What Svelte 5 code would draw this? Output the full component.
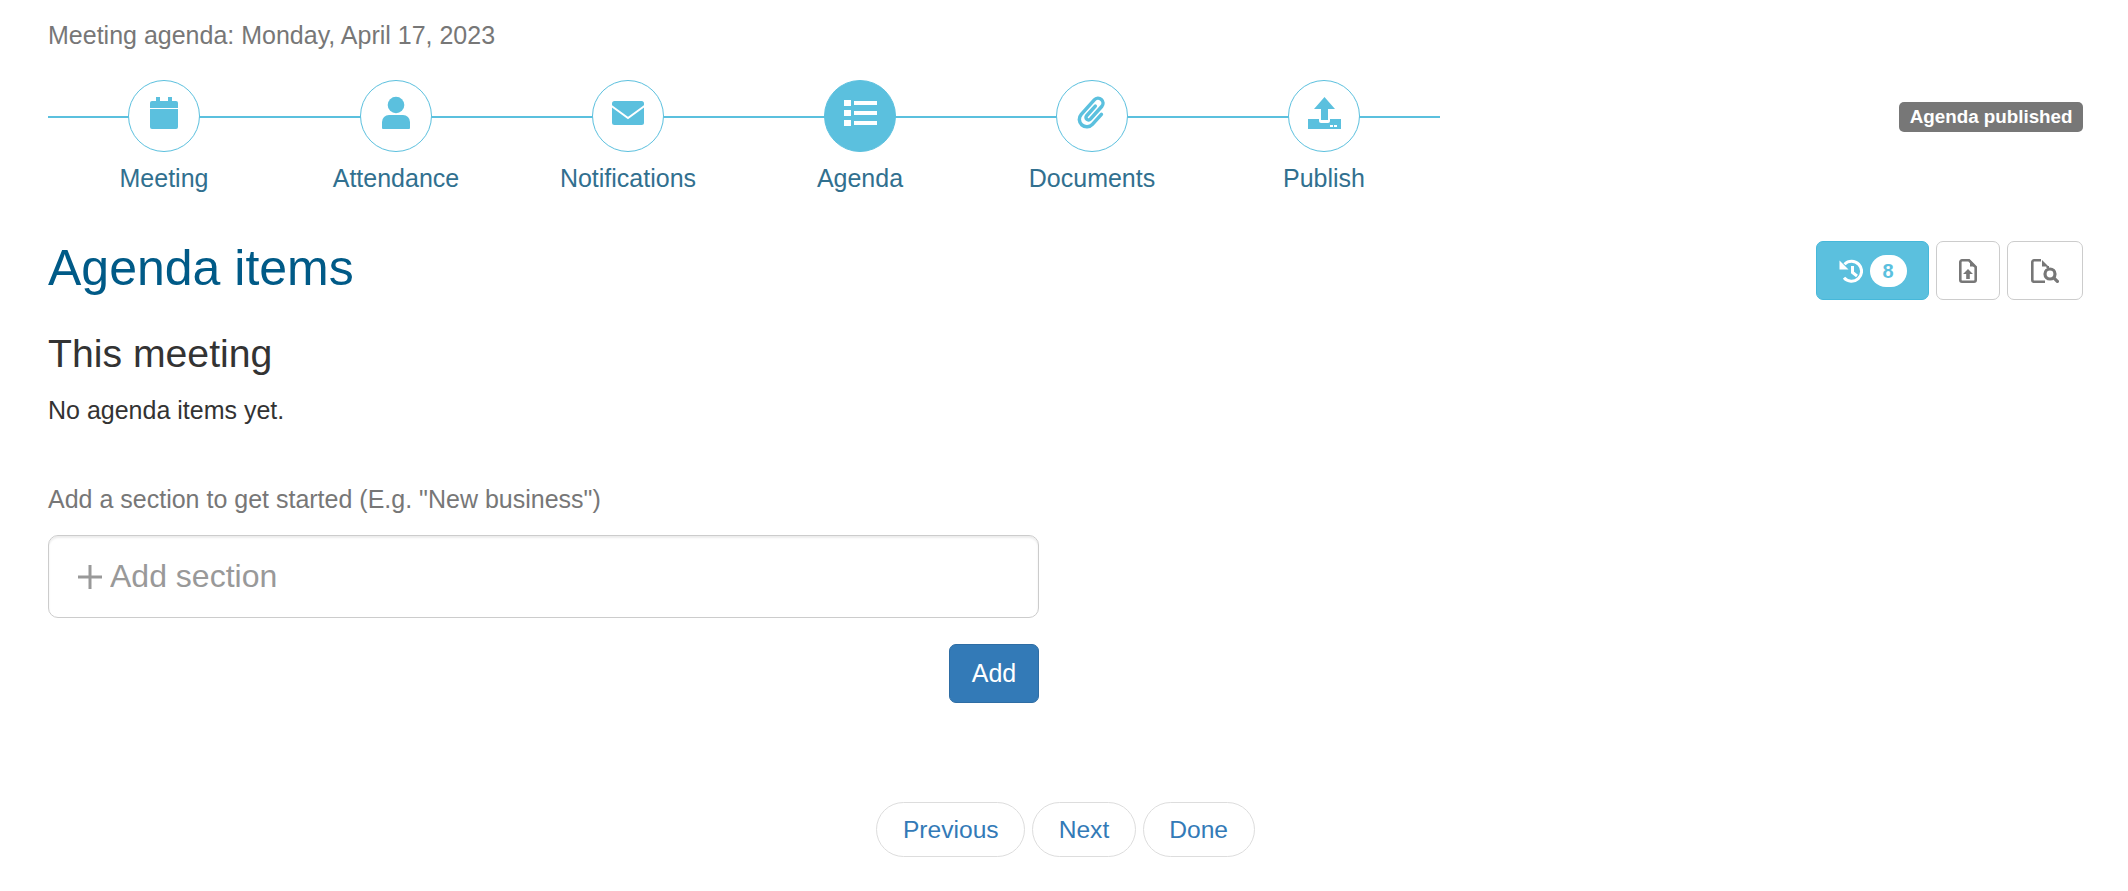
<script>
  const steps = [
    { key: 'meeting', label: 'Meeting' },
    { key: 'attendance', label: 'Attendance' },
    { key: 'notifications', label: 'Notifications' },
    { key: 'agenda', label: 'Agenda', active: true },
    { key: 'documents', label: 'Documents' },
    { key: 'publish', label: 'Publish' }
  ];
</script>

<div class="page">
  <div class="subtitle">Meeting agenda: Monday, April 17, 2023</div>

  <div class="top-row">
    <div class="stepper">
      {#each steps as step}
        <div class="step">
          <div class="track">
            <div class="circle" class:active={step.active}>
              <svg viewBox="0 0 40 40" width="40" height="40">
                {#if step.key === 'meeting'}
                  <rect x="12" y="1" width="4" height="6" />
                  <rect x="24" y="1" width="4" height="6" />
                  <rect x="6" y="5" width="28" height="28" rx="2" />
                  <rect class="cut" x="6" y="12" width="28" height="1" />
                {:else if step.key === 'attendance'}
                  <circle cx="20" cy="9" r="8.3" />
                  <path d="M6 32V26a7 7 0 0 1 7-7h14a7 7 0 0 1 7 7v6a1 1 0 0 1-1 1H7a1 1 0 0 1-1-1z" />
                {:else if step.key === 'notifications'}
                  <rect x="4" y="5" width="32" height="24" rx="2.5" />
                  <path class="cut-line" d="M3.5 10 20 22 36.500 10" />
                {:else if step.key === 'agenda'}
                  <rect class="cut" x="4" y="4" width="7" height="6" />
                  <rect class="cut" x="4" y="14" width="7" height="6" />
                  <rect class="cut" x="4" y="24" width="7" height="6" />
                  <rect class="cut" x="14" y="5" width="23" height="4" />
                  <rect class="cut" x="14" y="15" width="23" height="4" />
                  <rect class="cut" x="14" y="25" width="23" height="4" />
                {:else if step.key === 'documents'}
                  <g transform="rotate(42 20.500 17)">
                    <path class="clip" d="M28 12V25.500a7.500 7.500 0 0 1-15 0V6a5 5 0 0 1 10 0V23a2.500 2.500 0 0 1-5 0V10" />
                  </g>
                {:else}
                  <path d="M4 23h33v9.500a.5.5 0 0 1-.5.5H4.500a.5.5 0 0 1-.5-.5z" />
                  <path class="cut" d="M15 22h11v3a2 2 0 0 1-2 2h-7a2 2 0 0 1-2-2z" />
                  <path d="M20.500 1 31 13h-7v11h-7V13H10z" />
                  <rect class="cut" x="26" y="29" width="3" height="2" />
                  <rect class="cut" x="30" y="29" width="3" height="2" />
                {/if}
              </svg>
            </div>
          </div>
          <div class="step-label">{step.label}</div>
        </div>
      {/each}
    </div>
    <span class="status">Agenda published</span>
  </div>

  <div class="heading-row">
    <h1>Agenda items</h1>
    <div class="tools">
      <button class="tool history">
        <svg class="history-icon" viewBox="0 0 24 24" width="24" height="24">
          <path class="hist-line" d="M5.500 5.200A10 10 0 1 1 5 18.800" />
          <path class="hist-fill" d="M0.500 1.500v9h9z" />
          <path class="hist-line" d="M13.500 7v6.500l4.500 3.500" />
        </svg>
        <span class="count">8</span>
      </button>
      <button class="tool file-up" aria-label="Upload">
        <svg viewBox="0 0 18 24" width="18" height="24">
          <path class="doc-line" d="M10 1.300H3a1.700 1.700 0 0 0-1.700 1.700V21a1.700 1.700 0 0 0 1.700 1.700h12a1.700 1.700 0 0 0 1.700-1.700V8z" />
          <path class="doc-fill" d="M11 1l6 6.500h-6z" />
          <path class="doc-fill" d="M9 10l5 5h-3.200V20H7.200v-5H4z" />
        </svg>
      </button>
      <button class="tool file-find" aria-label="Preview">
        <svg viewBox="0 0 28 24" width="28" height="24">
          <path class="doc-line" d="M10 1.300H3a1.700 1.700 0 0 0-1.700 1.700V21a1.700 1.700 0 0 0 1.700 1.700h11" />
          <path class="doc-line" d="M16.700 7V9" />
          <path class="doc-fill" d="M11 1l6.500 6.500H11z" />
          <circle class="doc-line lens" cx="19" cy="15" r="5" />
          <path class="doc-line lens" d="M22.800 18.800 27.500 23.500" />
        </svg>
      </button>
    </div>
  </div>

  <h3>This meeting</h3>
  <p class="empty">No agenda items yet.</p>

  <div class="form">
    <label class="hint" for="section">Add a section to get started (E.g. "New business")</label>
    <div class="input-box">
      <svg class="plus" viewBox="0 0 24 24" width="24" height="24">
        <rect x="10.500" y="0" width="3" height="24" />
        <rect x="0" y="10.500" width="24" height="3" />
      </svg>
      <input id="section" type="text" placeholder="Add section" />
    </div>
    <div class="form-actions">
      <button class="add">Add</button>
    </div>
  </div>

  <div class="pager">
    <button>Previous</button>
    <button>Next</button>
    <button>Done</button>
  </div>
</div>

<style>
  :global(body) {
    margin: 0;
    background: #fff;
    font-family: "Liberation Sans", Arial, sans-serif;
  }

  .page {
    padding: 20px 45px 0 48px;
    color: #333;
  }

  .subtitle {
    font-size: 25px;
    line-height: 30px;
    color: #777;
    margin-bottom: 30px;
  }

  .top-row {
    display: flex;
    justify-content: space-between;
    align-items: flex-start;
  }

  .stepper {
    display: flex;
  }

  .step {
    width: 232px;
    text-align: center;
  }

  .track {
    display: flex;
    justify-content: center;
    background: linear-gradient(#5bc0de, #5bc0de) 0 36px / 100% 2px no-repeat;
  }

  .circle {
    box-sizing: border-box;
    width: 72px;
    height: 72px;
    border: 1.500px solid #5bc0de;
    border-radius: 50%;
    background: #fff;
    display: flex;
    align-items: center;
    justify-content: center;
    fill: #5bc0de;
  }

  .circle.active {
    background: #5bc0de;
  }

  .cut {
    fill: #fff;
  }

  .cut-line {
    fill: none;
    stroke: #fff;
    stroke-width: 2;
  }

  .clip {
    fill: none;
    stroke: #5bc0de;
    stroke-width: 3.500;
    stroke-linecap: round;
  }

  .step-label {
    margin-top: 8px;
    font-size: 25px;
    line-height: 36px;
    color: #31708f;
  }

  .status {
    margin-top: 22px;
    box-sizing: border-box;
    height: 30px;
    padding: 0 10.500px;
    border-radius: 5px;
    background: #777;
    color: #fff;
    font-size: 18.800px;
    font-weight: 700;
    line-height: 30px;
    white-space: nowrap;
  }

  .heading-row {
    display: flex;
    justify-content: space-between;
    align-items: flex-start;
    margin-top: 42px;
  }

  h1 {
    margin: 0;
    font-size: 50px;
    font-weight: 400;
    line-height: 60px;
    color: #005a87;
  }

  .tools {
    display: flex;
    gap: 7px;
    margin-top: 3px;
  }

  button {
    font-family: inherit;
  }

  .tool {
    box-sizing: border-box;
    height: 59px;
    padding: 0;
    border: 1.500px solid #ccc;
    border-radius: 7px;
    background: #fff;
    display: flex;
    align-items: center;
    justify-content: center;
  }

  .tool.history {
    width: 113px;
    gap: 7px;
    background: #5bc0de;
    border-color: #46b8da;
  }

  .tool.file-up {
    width: 64px;
  }

  .tool.file-find {
    width: 76px;
  }

  .hist-line {
    fill: none;
    stroke: #fff;
    stroke-width: 3;
  }

  .hist-fill {
    fill: #fff;
  }

  .doc-line {
    fill: none;
    stroke: #777;
    stroke-width: 2.600;
  }

  .lens {
    stroke-width: 3.200;
  }

  .doc-fill {
    fill: #777;
  }

  .count {
    width: 37px;
    height: 32px;
    border-radius: 16px;
    background: #fff;
    color: #5bc0de;
    font-size: 20px;
    font-weight: 700;
    line-height: 32px;
    text-align: center;
  }

  h3 {
    margin: 32px 0 0;
    font-size: 39.200px;
    font-weight: 400;
    line-height: 44px;
    color: #333;
  }

  .empty {
    margin: 17px 0 0;
    font-size: 25px;
    line-height: 34px;
    color: #333;
  }

  .form {
    width: 991px;
    margin-top: 56px;
  }

  .hint {
    display: block;
    font-size: 25px;
    line-height: 32px;
    color: #777;
  }

  .input-box {
    box-sizing: border-box;
    height: 83px;
    margin-top: 20px;
    padding-left: 29px;
    border: 1.500px solid #ccc;
    border-radius: 10px;
    display: flex;
    align-items: center;
    gap: 8px;
    box-shadow: inset 0 2px 2px rgba(0, 0, 0, 0.075);
  }

  .plus {
    flex: none;
    fill: #999;
  }

  input {
    flex: 1;
    min-width: 0;
    border: 0;
    outline: 0;
    padding: 0;
    background: transparent;
    font-family: inherit;
    font-size: 32px;
    color: #555;
  }

  input::placeholder {
    color: #999;
    opacity: 1;
  }

  .form-actions {
    display: flex;
    justify-content: flex-end;
    margin-top: 26px;
  }

  .add {
    box-sizing: border-box;
    width: 90px;
    height: 59px;
    padding: 0;
    border: 1.500px solid #2e6da4;
    border-radius: 7px;
    background: #337ab7;
    color: #fff;
    font-size: 25px;
  }

  .pager {
    display: flex;
    justify-content: center;
    gap: 7px;
    margin-top: 99px;
  }

  .pager button {
    box-sizing: border-box;
    height: 55px;
    padding: 0 25.500px;
    border: 1.500px solid #ddd;
    border-radius: 28px;
    background: #fff;
    color: #337ab7;
    font-size: 24.600px;
  }
</style>
